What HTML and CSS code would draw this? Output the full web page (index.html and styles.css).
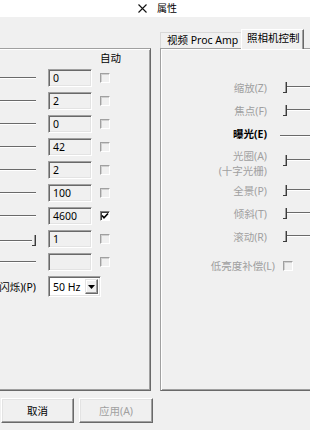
FILE: index.html
```html
<!DOCTYPE html>
<html lang="zh-CN">
<head>
    <meta charset="UTF-8">
    <meta name="viewport" content="width=device-width, initial-scale=1.0">
    <title>属性</title>
    <link rel="stylesheet" href="styles.css">
</head>
<body>

    <div class="titlebar">
        <svg class="close" width="9" height="9" viewBox="0 0 9 9">
            <path d="M0.5 0.5 L8.5 8.5 M8.5 0.5 L0.5 8.5" stroke="#111" stroke-width="1.1" fill="none"/>
        </svg>
        <span class="title">属性</span>
    </div>

    <div class="dialogs">
        <!-- left dialog: Proc Amp page, only its right side is visible -->
        <div class="dlg dlg-left">
            <div class="page page-left">
                <div class="auto-head">自动</div>

                <div class="row"><div class="track"></div><div class="field">0</div><div class="chk"></div></div>
                <div class="row"><div class="track"></div><div class="field">2</div><div class="chk"></div></div>
                <div class="row"><div class="track"></div><div class="field">0</div><div class="chk"></div></div>
                <div class="row"><div class="track"></div><div class="field">42</div><div class="chk"></div></div>
                <div class="row"><div class="track"></div><div class="field">2</div><div class="chk"></div></div>
                <div class="row"><div class="track"></div><div class="field">100</div><div class="chk"></div></div>
                <div class="row"><div class="track"></div><div class="field">4600</div>
                    <div class="chk on">
                        <svg width="8" height="8" viewBox="0 0 8 8"><path d="M1 3.5 L3 5.8 L7 1.5" stroke="#000" stroke-width="1.6" fill="none"/></svg>
                    </div>
                </div>
                <div class="row">
                    <div class="track track-thumb"><div class="line"></div><div class="thumb"></div></div>
                    <div class="field">1</div><div class="chk"></div>
                </div>
                <div class="row"><div class="track"></div><div class="field"></div><div class="chk"></div></div>

                <div class="row row-freq">
                    <div class="freq-label"><span>电源线频率(防闪烁)(P)</span></div>
                    <div class="combo">
                        <span class="combo-text">50 Hz</span>
                        <span class="combo-btn">
                            <svg width="7" height="4" viewBox="0 0 7 4"><path d="M0 0 H7 L3.5 4 Z" fill="#000"/></svg>
                        </span>
                    </div>
                </div>
            </div>

            <div class="buttons">
                <button class="btn">取消</button>
                <button class="btn btn-off">应用(A)</button>
            </div>
        </div>

        <!-- right dialog: camera control page -->
        <div class="dlg dlg-right">
            <div class="tabs">
                <div class="tab">视频 Proc Amp</div>
                <div class="tab tab-active">照相机控制</div>
            </div>
            <div class="page page-right">
                <div class="ctl">
                    <span class="lbl">缩放(Z)</span>
                    <div class="slider"><div class="thumb"></div><div class="chan"></div></div>
                </div>
                <div class="ctl">
                    <span class="lbl">焦点(F)</span>
                    <div class="slider"><div class="thumb"></div><div class="chan"></div></div>
                </div>
                <div class="ctl">
                    <span class="lbl lbl-on">曝光(E)</span>
                    <div class="slider slider-bare"><div class="chan"></div></div>
                </div>
                <div class="ctl ctl-tall">
                    <span class="lbl">光圈(A)<br>(十字光栅)</span>
                    <div class="slider"><div class="thumb"></div><div class="chan"></div></div>
                </div>
                <div class="ctl">
                    <span class="lbl">全景(P)</span>
                    <div class="slider"><div class="thumb"></div><div class="chan"></div></div>
                </div>
                <div class="ctl">
                    <span class="lbl">倾斜(T)</span>
                    <div class="slider"><div class="thumb"></div><div class="chan"></div></div>
                </div>
                <div class="ctl">
                    <span class="lbl">滚动(R)</span>
                    <div class="slider"><div class="thumb"></div><div class="chan"></div></div>
                </div>
                <div class="ctl ctl-low">
                    <span class="lbl lbl-wide">低亮度补偿(L)</span>
                    <div class="chk"></div>
                </div>
            </div>
        </div>
    </div>

</body>
</html>
```

FILE: styles.css
```css
body {
    margin: 0;
    width: 310px;
    height: 430px;
    overflow: hidden;
    background: #f0f0f0;
    font-family: "Noto Sans", "Noto Sans CJK SC", sans-serif;
    font-size: 10.5px;
    color: #000;
}

/* title bar */
.titlebar {
    height: 17px;
    background: #fff;
    display: flex;
    align-items: center;
    padding-left: 138px;
    gap: 10px;
}

.titlebar .title {
    font-size: 10px;
    line-height: 17px;
}

.dialogs {
    display: flex;
    height: 413px;
}

.dlg {
    flex: none;
    box-sizing: border-box;
}

/* left dialog */
.dlg-left {
    width: 153px;
    padding-top: 31px;
    display: flex;
    flex-direction: column;
}

.page {
    height: 343px;
    box-sizing: border-box;
}

.page-left {
    width: 151px;
    border-top: 1px solid #a0a0a0;
    border-right: 1px solid #696969;
    border-bottom: 1px solid #696969;
    box-shadow: inset 0 1px #fff, inset -1px -1px #a0a0a0;
}

.auto-head {
    padding-left: 100px;
    height: 14px;
    line-height: 14px;
    margin: 2px 0 4px;
}

.row {
    display: flex;
    align-items: center;
    height: 17px;
    margin-bottom: 6px;
}

.track {
    width: 36px;
    flex: none;
    border-top: 1px solid #6a6a6a;
    border-bottom: 1px solid #fff;
}

.track-thumb {
    display: flex;
    align-items: flex-end;
    border: none;
    height: 11px;
    margin-top: 4px;
}

.track-thumb .line {
    flex: 1;
    border-top: 1px solid #6a6a6a;
    border-bottom: 1px solid #fff;
    margin-bottom: 4px;
}

.thumb {
    width: 3px;
    height: 10px;
    flex: none;
    border-right: 1px solid #3c3c3c;
    border-bottom: 1px solid #3c3c3c;
    box-shadow: inset -1px 0 #a0a0a0;
}

.field {
    width: 44px;
    height: 18px;
    flex: none;
    margin-left: 12px;
    box-sizing: border-box;
    border: 1px solid;
    border-color: #a0a0a0 #fff #fff #a0a0a0;
    box-shadow: inset 1px 1px #696969, inset -1px -1px #e3e3e3;
    padding-left: 4px;
    line-height: 16px;
}

.chk {
    width: 10px;
    height: 10px;
    flex: none;
    margin-left: 8px;
    margin-top: 1px;
    box-sizing: border-box;
    border: 1px solid;
    border-color: #a0a0a0 #fff #fff #a0a0a0;
    box-shadow: inset 1px 1px #d0d0d0;
    display: flex;
    align-items: center;
    justify-content: center;
}

.chk.on {
    border-color: #808080 #fff #fff #808080;
    box-shadow: inset 1px 1px #404040;
    background: #fff;
}

.row-freq {
    height: 21px;
    margin-top: 1px;
}

.freq-label {
    width: 36px;
    flex: none;
    overflow: hidden;
    display: flex;
    justify-content: flex-end;
    white-space: nowrap;
}

.combo {
    width: 53px;
    height: 21px;
    flex: none;
    margin-left: 12px;
    box-sizing: border-box;
    border: 1px solid;
    border-color: #a0a0a0 #fff #fff #a0a0a0;
    box-shadow: inset 1px 1px #696969, inset -1px -1px #e3e3e3;
    background: #fff;
    display: flex;
    align-items: center;
    padding: 2px;
}

.combo-text {
    flex: 1;
    padding-left: 2px;
}

.combo-btn {
    width: 13px;
    height: 15px;
    box-sizing: border-box;
    background: #f0f0f0;
    border: 1px solid;
    border-color: #e3e3e3 #696969 #696969 #e3e3e3;
    box-shadow: inset -1px -1px #a0a0a0, inset 1px 1px #fff;
    display: flex;
    align-items: center;
    justify-content: center;
}

.buttons {
    display: flex;
    justify-content: flex-end;
    gap: 5px;
    margin-top: 7px;
}

.btn {
    flex: none;
    height: 25px;
    width: 74px;
    margin: 0;
    padding: 0;
    font: inherit;
    color: #000;
    background: #f0f0f0;
    border: 1px solid;
    border-color: #fff #696969 #696969 #fff;
    box-shadow: inset -1px -1px #a0a0a0, inset 1px 1px #e3e3e3;
}

.btn:first-child {
    width: 73px;
}

.btn-off {
    color: #a0a0a0;
}

/* right dialog */
.dlg-right {
    width: 170px;
    padding-top: 12px;
    padding-left: 7px;
}

.tabs {
    display: flex;
    align-items: flex-end;
    height: 19px;
}

.tab {
    height: 16px;
    box-sizing: border-box;
    width: 81px;
    padding-left: 6px;
    line-height: 15px;
    border-top: 1px solid #d8d8d8;
    border-left: 1px solid #d8d8d8;
    white-space: nowrap;
}

.tab-active {
    position: relative;
    height: 20px;
    width: 63px;
    margin-bottom: -1px;
    padding-left: 5px;
    line-height: 17px;
    background: #f0f0f0;
    border-top: 1px solid #fff;
    border-left: 1px solid #fff;
    border-right: 1px solid #696969;
    box-shadow: inset -1px 0 #a0a0a0;
}

.page-right {
    border-top: 1px solid #a0a0a0;
    border-left: 1px solid #a0a0a0;
    border-bottom: 1px solid #696969;
    box-shadow: inset 1px 1px #fff, inset 0 -1px #a0a0a0;
    padding-top: 27px;
}

.ctl {
    display: grid;
    grid-template-columns: 106px 1fr;
    column-gap: 16px;
    align-items: center;
    height: 23px;
}

.lbl {
    text-align: right;
    color: #a0a0a0;
    white-space: nowrap;
}

.lbl-on {
    color: #000;
    font-weight: bold;
}

.ctl-tall {
    height: 34px;
    align-items: start;
}

.ctl-tall .lbl {
    padding-top: 4px;
    line-height: 15px;
}

.ctl-tall .slider {
    margin-top: 10px;
}

.ctl-low {
    margin-top: 6px;
}

.lbl-wide {
    margin-right: -8px;
}

.ctl-low .chk {
    margin-left: 0;
}

.slider {
    display: flex;
    align-items: center;
    height: 11px;
}

.slider .thumb {
    height: 10px;
}

.chan {
    flex: 1;
    border-top: 1px solid #6a6a6a;
    border-bottom: 1px solid #fff;
    margin-top: -2px;
}

.slider-bare {
    margin-left: -3px;
}

.slider-bare .chan {
    margin-top: 4px;
}
```
